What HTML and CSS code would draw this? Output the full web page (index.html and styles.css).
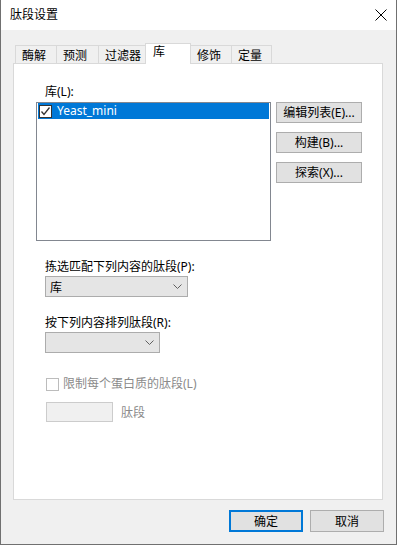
FILE: index.html
```html
<!DOCTYPE html>
<html lang="zh-CN">
<head>
    <meta charset="UTF-8">
    <title>肽段设置</title>
    <link rel="stylesheet" href="styles.css">
</head>
<body>
    <div class="window">
        <div class="titlebar">
            <span class="title">肽段设置</span>
            <svg class="close" width="12" height="12" viewBox="0 0 12 12">
                <path d="M0.5 0.5 L11.5 11.5 M11.5 0.5 L0.5 11.5" stroke="#000" stroke-width="1" fill="none"/>
            </svg>
        </div>
        <div class="content">
            <div class="tabs">
                <div class="tab">酶解</div>
                <div class="tab w43">预测</div>
                <div class="tab wide">过滤器</div>
                <div class="tab active">库</div>
                <div class="tab">修饰</div>
                <div class="tab w41">定量</div>
            </div>
            <div class="panel">
                <div class="label lib-label">库(L):</div>
                <div class="lib-row">
                    <div class="listbox">
                        <div class="list-item selected">
                            <span class="check on">
                                <svg width="11" height="11" viewBox="0 0 11 11">
                                    <path d="M1.5 5.5 L4 8.5 L9.5 1.5" stroke="#333" stroke-width="1.3" fill="none"/>
                                </svg>
                            </span>
                            <span class="item-text">Yeast_mini</span>
                        </div>
                    </div>
                    <div class="side-buttons">
                        <button class="btn">编辑列表(E)...</button>
                        <button class="btn">构建(B)...</button>
                        <button class="btn">探索(X)...</button>
                    </div>
                </div>

                <div class="field">
                    <div class="label">拣选匹配下列内容的肽段(P):</div>
                    <div class="combo combo-wide">
                        <span>库</span>
                        <svg class="chev" width="9" height="5" viewBox="0 0 9 5">
                            <path d="M0.5 0.5 L4.5 4.5 L8.5 0.5" stroke="#606060" fill="none"/>
                        </svg>
                    </div>
                </div>

                <div class="field">
                    <div class="label">按下列内容排列肽段(R):</div>
                    <div class="combo combo-narrow">
                        <span></span>
                        <svg class="chev" width="9" height="5" viewBox="0 0 9 5">
                            <path d="M0.5 0.5 L4.5 4.5 L8.5 0.5" stroke="#606060" fill="none"/>
                        </svg>
                    </div>
                </div>

                <div class="limit-row disabled">
                    <span class="check off"></span>
                    <span>限制每个蛋白质的肽段(L)</span>
                </div>
                <div class="count-row disabled">
                    <div class="textbox"></div>
                    <span>肽段</span>
                </div>
            </div>
            <div class="footer">
                <button class="btn default">确定</button>
                <button class="btn">取消</button>
            </div>
        </div>
    </div>
</body>
</html>
```

FILE: styles.css
```css
* {
    box-sizing: border-box;
}
body {
    margin: 0;
    font-family: "Noto Sans", "Noto Sans CJK SC", sans-serif;
    font-size: 12px;
    color: #000;
    background: #fff;
}
.window {
    width: 397px;
    height: 545px;
    background: #f0f0f0;
    border: 1px solid #707070;
    border-top: none;
    display: flex;
    flex-direction: column;
}
.titlebar {
    height: 30px;
    background: #fff;
    display: flex;
    align-items: center;
    justify-content: space-between;
    padding: 0 9px 1px 9px;
}
.title {
    font-size: 12px;
    line-height: 16px;
}
.content {
    padding: 13px 12px 0 12px;
}
.tabs {
    display: flex;
    align-items: flex-end;
    height: 20px;
    margin-left: 2px;
}
.tab {
    width: 42px;
    height: 18px;
    border: 1px solid #d9d9d9;
    border-bottom: none;
    margin-left: -1px;
    line-height: 17px;
    padding: 1px 0 0 6px;
}
.tab:first-child {
    margin-left: 0;
}
.tab.w43 {
    width: 43px;
}
.tab.w41 {
    width: 41px;
}
.tab.wide {
    width: 48px;
}
.tab.active {
    width: 46px;
    height: 21px;
    background: #fff;
    margin-bottom: -1px;
    padding: 0 0 0 7px;
    line-height: 16px;
    position: relative;
    z-index: 1;
}
.panel {
    width: 370px;
    height: 437px;
    background: #fff;
    border: 1px solid #d9d9d9;
    padding: 20px 0 0 22px;
}
.label {
    line-height: 16px;
    height: 16px;
}
.lib-label {
    margin-left: 9px;
    margin-bottom: 2px;
}
.lib-row {
    display: flex;
    gap: 5px;
}
.listbox {
    width: 235px;
    height: 139px;
    border: 1px solid #828790;
    padding: 0 1px;
}
.list-item {
    height: 16px;
    display: flex;
    align-items: center;
    gap: 5px;
    padding-left: 1px;
}
.list-item.selected {
    background: #0078d7;
    color: #fff;
}
.item-text {
    line-height: 16px;
}
.check {
    width: 13px;
    height: 13px;
    display: flex;
    align-items: center;
    justify-content: center;
    background: #fff;
}
.check.on {
    border: 1px solid #333;
}
.check.off {
    border: 1px solid #bcbcbc;
}
.side-buttons {
    display: flex;
    flex-direction: column;
    gap: 9px;
}
.btn {
    font-family: "Noto Sans", "Noto Sans CJK SC", sans-serif;
    font-size: 12px;
    color: #000;
    background: #e1e1e1;
    border: 1px solid #adadad;
    height: 21px;
    width: 86px;
    padding: 0;
    line-height: 17px;
}
.field {
    margin-top: 18px;
    margin-left: 9px;
}
.combo {
    margin-top: 1px;
    height: 21px;
    background: #e5e5e5;
    border: 1px solid #acacac;
    display: flex;
    align-items: center;
    justify-content: space-between;
    padding: 0 5px 0 4px;
}
.combo-wide {
    width: 143px;
}
.combo-narrow {
    width: 115px;
}
.disabled {
    color: #8a8a8a;
}
.limit-row {
    margin: 23px 0 0 10px;
    display: flex;
    align-items: center;
    gap: 4px;
    line-height: 16px;
}
.count-row {
    margin: 10px 0 0 10px;
    display: flex;
    align-items: center;
    gap: 8px;
}
.textbox {
    width: 67px;
    height: 20px;
    background: #f0f0f0;
    border: 1px solid #cccccc;
}
.footer {
    display: flex;
    justify-content: flex-end;
    gap: 7px;
    margin-top: 10px;
}
.footer .btn {
    width: 74px;
    height: 22px;
}
.footer .btn.default {
    border: 2px solid #0078d7;
}
```
